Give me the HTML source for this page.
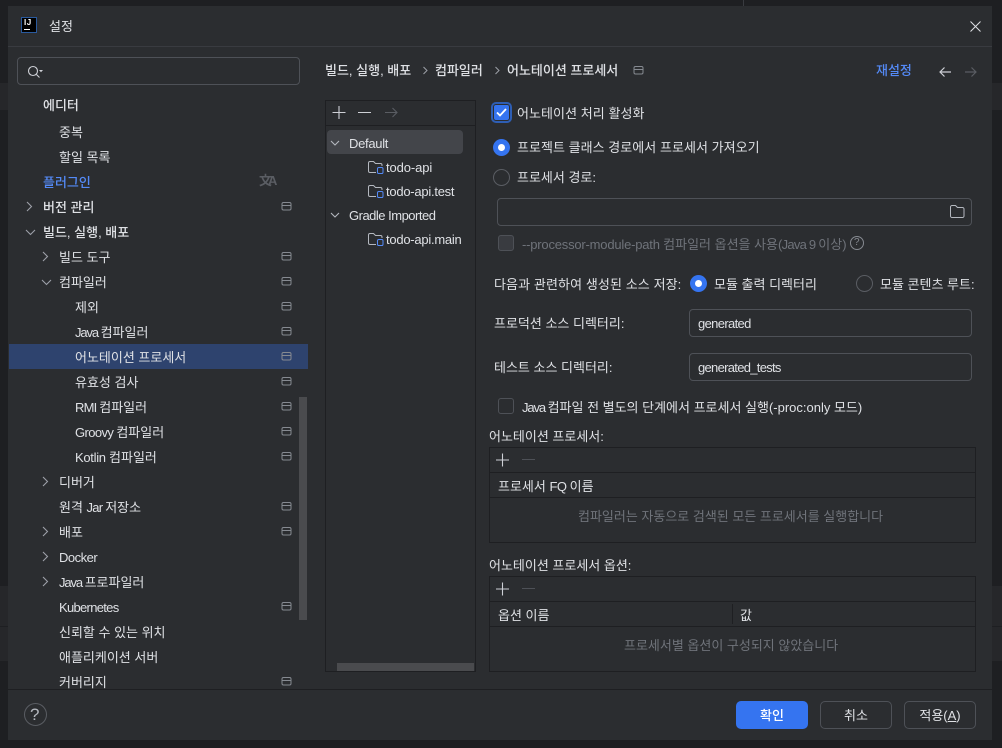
<!DOCTYPE html>
<html lang="ko"><head><meta charset="utf-8"><style>
html,body{margin:0;padding:0;width:1002px;height:748px;overflow:hidden;background:#1e1f22}
body{position:relative;font-family:"Liberation Sans","Noto Sans CJK KR",sans-serif;font-size:13px;color:#dfe1e5}
div,span.t{position:absolute;box-sizing:border-box}
.t{line-height:16px;white-space:nowrap;margin-top:1px}
.b{font-weight:500}
.d{color:#6f737a}
.box{border:1px solid #4e5157;border-radius:4px}
.cb{width:16px;height:16px;border:1px solid #4e5157;border-radius:3px}
.tb{border:1px solid #1e1f22}
.hl{height:1px;background:#1e1f22}
.r{width:17px;height:17px;border-radius:50%;background:#3574f0}
.r:after{content:"";position:absolute;left:5px;top:5px;width:7px;height:7px;border-radius:50%;background:#fff}
.ro{width:17px;height:17px;border-radius:50%;border:1px solid #5a5d63}
.btn{height:28px;width:72px;top:701px;border:1px solid #4e5157;border-radius:5px;text-align:center;line-height:28px}
svg{position:absolute;overflow:visible;fill:none}
</style></head><body>
<div style="left:0;top:83px;width:8px;height:27px;background:#26272a"></div>
<div style="left:992px;top:83px;width:10px;height:27px;background:#26272a"></div>
<div style="left:0;top:586px;width:8px;height:40px;background:#26272a"></div>
<div style="left:0;top:627px;width:8px;height:34px;background:#26272a"></div>
<div style="left:992px;top:586px;width:10px;height:40px;background:#26272a"></div>
<div style="left:992px;top:627px;width:10px;height:34px;background:#26272a"></div>
<div style="left:743px;top:0;width:1px;height:6px;background:#393b40"></div>
<div style="left:8px;top:6px;width:984px;height:734px;background:#2b2d30"></div>
<div style="left:8px;top:46px;width:984px;height:1px;background:#393b40"></div>
<div style="left:8px;top:689px;width:984px;height:1px;background:#1e1f22"></div>

<!-- title -->
<div style="left:21px;top:17px;width:16px;height:16px;background:#000;border:1px solid #2a5a9e"></div>
<span class="t" style="left:24px;top:18px;margin-top:0;font-size:8px;line-height:9px;font-weight:700;color:#fff;letter-spacing:.5px">IJ</span>
<div style="left:24px;top:29px;width:6px;height:1px;background:#fff"></div>
<span class="t" style="left:49px;top:18px">설정</span>
<svg style="left:970px;top:21px" width="11" height="11"><path d="M.5.5l10 10M10.500.5l-10 10" stroke="#dfe1e5"/></svg>

<!-- search -->
<div class="box" style="left:17px;top:57px;width:283px;height:28px"></div>
<svg style="left:27px;top:65px" width="16" height="14"><circle cx="6" cy="6" r="4.500" stroke="#ced0d6" stroke-width="1.100"/><path d="M9.500 9.500l3 3" stroke="#ced0d6" stroke-width="1.100"/><path d="M12 5h4l-2 2.200z" fill="#ced0d6"/></svg>

<!-- sidebar -->
<div style="left:9px;top:344px;width:299px;height:25px;background:#2e436e"></div>
<div style="left:299px;top:397px;width:8px;height:223px;background:#4a4b4e"></div>
<span class="t b" style="left:43px;top:97px">에디터</span>
<span class="t" style="left:59px;top:124px">중복</span>
<span class="t" style="left:59px;top:149px">할일 목록</span>
<span class="t b" style="left:43px;top:174px;color:#548af7">플러그인</span>
<span class="t b" style="left:43px;top:199px">버전 관리</span>
<span class="t b" style="left:43px;top:224px">빌드, 실행, 배포</span>
<span class="t" style="left:59px;top:249px">빌드 도구</span>
<span class="t" style="left:59px;top:274px">컴파일러</span>
<span class="t" style="left:75px;top:299px">제외</span>
<span class="t" style="left:75px;top:324px"><span style="letter-spacing:-1.100px">Java </span>컴파일러</span>
<span class="t" style="left:75px;top:349px">어노테이션 프로세서</span>
<span class="t" style="left:75px;top:374px">유효성 검사</span>
<span class="t" style="left:75px;top:399px"><span style="letter-spacing:-.8px">RMI </span>컴파일러</span>
<span class="t" style="left:75px;top:424px"><span style="letter-spacing:-.6px">Groovy </span>컴파일러</span>
<span class="t" style="left:75px;top:449px"><span style="letter-spacing:-.3px">Kotlin </span>컴파일러</span>
<span class="t" style="left:59px;top:474px">디버거</span>
<span class="t" style="left:59px;top:499px">원격 <span style="letter-spacing:-.75px">Jar </span>저장소</span>
<span class="t" style="left:59px;top:524px">배포</span>
<span class="t" style="left:59px;top:549px;letter-spacing:-.5px">Docker</span>
<span class="t" style="left:59px;top:574px"><span style="letter-spacing:-1.100px">Java </span>프로파일러</span>
<span class="t" style="left:59px;top:599px;letter-spacing:-.7px">Kubernetes</span>
<span class="t" style="left:59px;top:624px">신뢰할 수 있는 위치</span>
<span class="t" style="left:59px;top:649px">애플리케이션 서버</span>
<div style="left:0;top:674px;width:308px;height:15px;overflow:hidden"><span class="t" style="left:59px;top:0">커버리지</span></div>

<svg style="left:0;top:0" width="320" height="700" stroke="#9da0a8" stroke-width="1.100">
<path d="M27 202l4.500 4.500-4.500 4.500M43 252l4.500 4.500-4.500 4.500M43 477l4.500 4.500-4.500 4.500M43 527l4.500 4.500-4.500 4.500M43 552l4.500 4.500-4.500 4.500M43 577l4.500 4.500-4.500 4.500"/>
<path d="M26 230l4.500 4.500 4.500-4.500M42 280l4.500 4.500 4.500-4.500"/>
<g stroke="#868a91" stroke-width="1" transform="translate(0 -1)">
<path id="m" d="M283.500 203.500h6a1.500 1.500 0 0 1 1.500 1.500v4.500a1.500 1.500 0 0 1-1.500 1.500h-6a1.500 1.500 0 0 1-1.500-1.500v-4.500a1.500 1.500 0 0 1 1.500-1.500zM282 206.500h9"/>
<use href="#m" y="50"/><use href="#m" y="75"/><use href="#m" y="100"/><use href="#m" y="125"/><use href="#m" y="150"/><use href="#m" y="175"/><use href="#m" y="200"/><use href="#m" y="225"/><use href="#m" y="250"/><use href="#m" y="300"/><use href="#m" y="325"/><use href="#m" y="400"/><use href="#m" y="475"/>
</g>
</svg>
<span class="t" style="left:259px;top:172px;font-size:13px;font-weight:700;color:#5a5d63;letter-spacing:-4px">文A</span>

<!-- breadcrumb -->
<span class="t b" style="left:325px;top:62px">빌드, 실행, 배포</span>
<span class="t b" style="left:435px;top:62px">컴파일러</span>
<span class="t b" style="left:507px;top:62px">어노테이션 프로세서</span>
<span class="t b" style="left:876px;top:62px;color:#548af7">재설정</span>
<svg style="left:0;top:0" width="1002" height="100">
<path d="M423.500 67l3.500 3.500-3.500 3.500M495.500 67l3.500 3.500-3.500 3.500" stroke="#9da0a8"/>
<path d="M635.500 66.500h6a1.500 1.500 0 0 1 1.500 1.500v4.500a1.500 1.500 0 0 1-1.500 1.500h-6a1.500 1.500 0 0 1-1.500-1.500v-4.500a1.500 1.500 0 0 1 1.500-1.500zM634 69.500h9" stroke="#868a91"/>
<path d="M951 72h-11M944.500 67.500l-4.500 4.500 4.500 4.500" stroke="#ced0d6" stroke-width="1.200"/>
<path d="M965 72h11M971.500 67.500l4.500 4.500-4.500 4.500" stroke="#5a5d63" stroke-width="1.200"/>
</svg>

<!-- tree panel -->
<div class="tb" style="left:325px;top:100px;width:151px;height:572px"></div>
<div class="hl" style="left:325px;top:125px;width:151px"></div>
<div style="left:327px;top:130px;width:136px;height:24px;background:#43454a;border-radius:4px"></div>
<div style="left:337px;top:663px;width:137px;height:8px;background:#4a4b4e"></div>
<svg style="left:0;top:0" width="480" height="260">
<path d="M332.500 112.500h13M339 106v13M358 112.500h13" stroke="#ced0d6" stroke-width="1.100"/>
<path d="M385 112.500h12M392.500 108l4.500 4.500-4.500 4.500" stroke="#5a5d63" stroke-width="1.100"/>
<path d="M331 141l4 4 4-4M331 213l4 4 4-4" stroke="#b4b8bf" stroke-width="1.100"/>
<g id="f"><path d="M376 172.500h-6a1.500 1.500 0 0 1-1.500-1.500v-8a1.500 1.500 0 0 1 1.500-1.500h3.500l2 2h5a1.500 1.500 0 0 1 1.500 1.500v1" stroke="#b4b8bf"/><rect x="377.500" y="167.500" width="5.500" height="6" rx="1.300" stroke="#548af7"/></g>
<use href="#f" y="24"/><use href="#f" y="72"/>
</svg>
<span class="t" style="left:349px;top:135px;letter-spacing:-.3px">Default</span>
<span class="t" style="left:386px;top:159px;letter-spacing:-.1px">todo-api</span>
<span class="t" style="left:386px;top:183px;letter-spacing:-.25px">todo-api.test</span>
<span class="t" style="left:349px;top:207px;letter-spacing:-.5px">Gradle Imported</span>
<span class="t" style="left:386px;top:231px;letter-spacing:-.25px">todo-api.main</span>

<!-- options -->
<div style="left:491px;top:102px;width:21px;height:21px;border:2px solid #2e5eb4;border-radius:5px"></div>
<div style="left:494px;top:105px;width:15px;height:15px;background:#3574f0;border-radius:2px"></div>
<svg style="left:496px;top:108px" width="11" height="9"><path d="M1 4.500l3 3 6-6.500" stroke="#fff" stroke-width="1.800"/></svg>
<span class="t" style="left:517px;top:105px;letter-spacing:.06px">어노테이션 처리 활성화</span>
<div class="r" style="left:493px;top:139px"></div>
<span class="t" style="left:517px;top:139px;letter-spacing:.04px">프로젝트 클래스 경로에서 프로세서 가져오기</span>
<div class="ro" style="left:493px;top:169px"></div>
<span class="t" style="left:517px;top:169px">프로세서 경로:</span>
<div class="box" style="left:497px;top:198px;width:475px;height:28px"></div>
<svg style="left:950px;top:205px" width="15" height="14"><path d="M2 .500h3.500l2 2H12.500a1.500 1.500 0 0 1 1.500 1.500v7a1.500 1.500 0 0 1-1.500 1.500H2a1.500 1.500 0 0 1-1.500-1.500V2A1.500 1.500 0 0 1 2 .500z" stroke="#b4b8bf"/></svg>
<div class="cb" style="left:498px;top:235px;background:#393b40"></div>
<span class="t d" style="left:522px;top:236px"><span style="letter-spacing:-.2px">--processor-module-path </span>컴파일러 옵션을 사용<span style="letter-spacing:-.75px">(Java 9 </span>이상)</span>
<svg style="left:850px;top:236px" width="15" height="15"><circle cx="7" cy="7" r="6.500" stroke="#868a91"/></svg>
<span class="t" style="left:854px;top:234px;font-size:10px;color:#868a91">?</span>

<span class="t" style="left:494px;top:276px;letter-spacing:.1px">다음과 관련하여 생성된 소스 저장:</span>
<div class="r" style="left:690px;top:275px"></div>
<span class="t" style="left:714px;top:276px">모듈 출력 디렉터리</span>
<div class="ro" style="left:856px;top:275px"></div>
<span class="t" style="left:880px;top:276px">모듈 콘텐츠 루트:</span>
<span class="t" style="left:494px;top:315px">프로덕션 소스 디렉터리:</span>
<div class="box" style="left:689px;top:309px;width:283px;height:28px"></div>
<span class="t" style="left:698px;top:315px;letter-spacing:-.65px">generated</span>
<span class="t" style="left:494px;top:359px">테스트 소스 디렉터리:</span>
<div class="box" style="left:689px;top:353px;width:283px;height:28px"></div>
<span class="t" style="left:698px;top:359px;letter-spacing:-.7px">generated_tests</span>
<div class="cb" style="left:498px;top:398px"></div>
<span class="t" style="left:522px;top:399px"><span style="letter-spacing:-1.100px">Java </span>컴파일 전 별도의 단계에서 프로세서 실행(-proc:only 모드)</span>

<!-- tables -->
<span class="t" style="left:489px;top:428px">어노테이션 프로세서:</span>
<div class="tb" style="left:489px;top:447px;width:487px;height:96px"></div>
<div class="hl" style="left:489px;top:472px;width:487px"></div>
<div class="hl" style="left:489px;top:497px;width:487px"></div>
<span class="t" style="left:498px;top:478px">프로세서 <span style="letter-spacing:-.5px">FQ </span>이름</span>
<span class="t d" style="left:578px;top:508px">컴파일러는 자동으로 검색된 모든 프로세서를 실행합니다</span>

<span class="t" style="left:489px;top:557px">어노테이션 프로세서 옵션:</span>
<div class="tb" style="left:489px;top:576px;width:487px;height:96px"></div>
<div class="hl" style="left:489px;top:601px;width:487px"></div>
<div class="hl" style="left:489px;top:626px;width:487px"></div>
<div style="left:732px;top:604px;width:1px;height:20px;background:#1e1f22"></div>
<span class="t" style="left:498px;top:607px">옵션 이름</span>
<span class="t" style="left:740px;top:607px">값</span>
<span class="t d" style="left:624px;top:637px">프로세서별 옵션이 구성되지 않았습니다</span>
<svg style="left:0;top:0" width="560" height="600">
<path d="M496 460h13M502.500 453.500v13M496 589h13M502.500 582.500v13" stroke="#ced0d6" stroke-width="1.100"/>
<path d="M522 459.500h13M522 588.500h13" stroke="#4e5157" stroke-width="1.100"/>
</svg>

<!-- footer -->
<svg style="left:24px;top:703px" width="23" height="23"><circle cx="11.500" cy="11.500" r="11" stroke="#5a5d63"/></svg>
<span class="t" style="left:30px;top:704px;font-size:17px;line-height:20px;color:#b4b8bf">?</span>
<div class="btn b" style="left:736px;background:#3574f0;border-color:#3574f0;color:#fff">확인</div>
<div class="btn" style="left:820px">취소</div>
<div class="btn" style="left:904px">적용(<span style="text-decoration:underline">A</span>)</div>
</body></html>
